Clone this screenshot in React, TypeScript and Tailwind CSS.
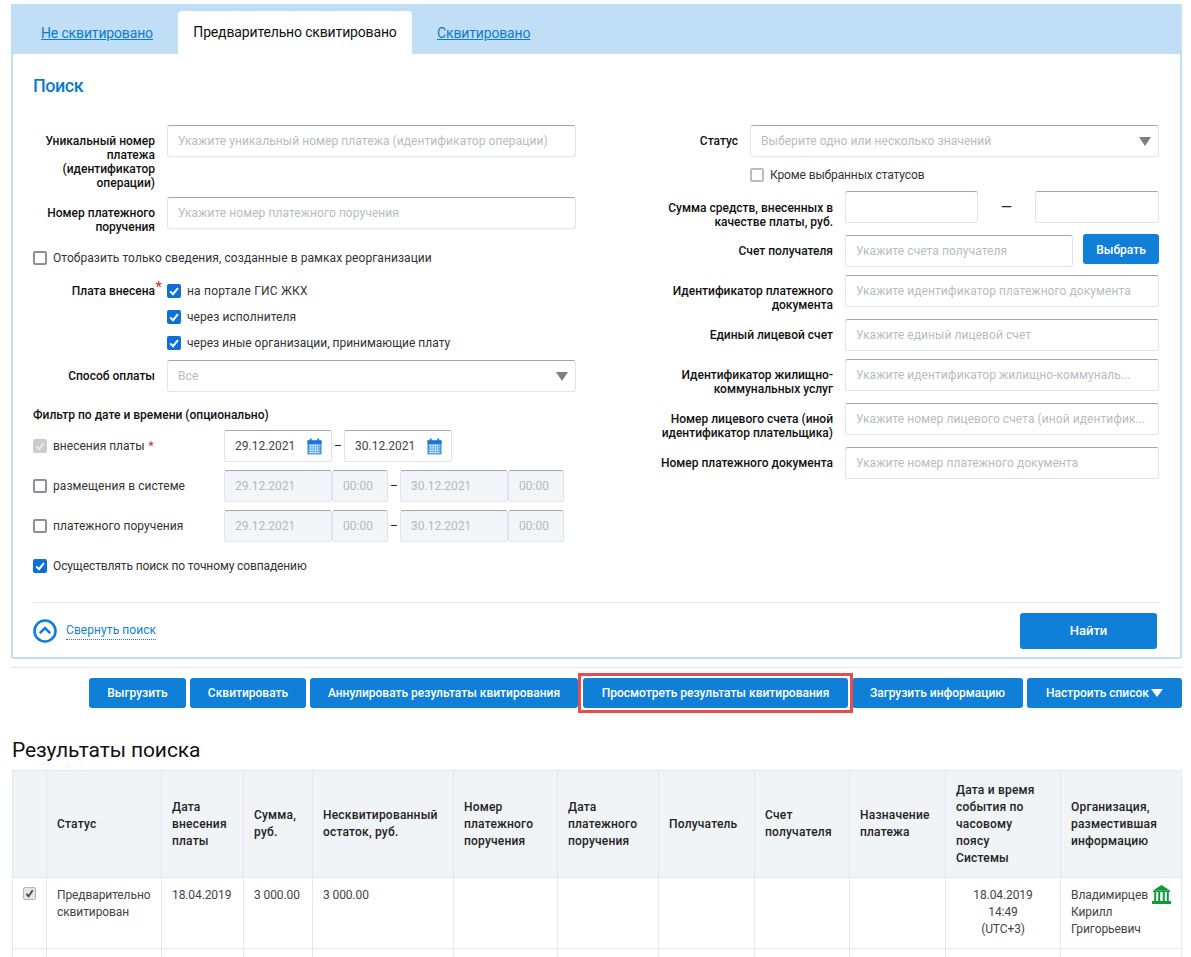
const labelCls = "text-right text-[12px] leading-[14px] font-medium text-[#111]";
const inputCls =
  "h-8 rounded-[3px] border border-[#dfe5ea] border-t-[#a4a6aa] bg-white px-[10px] text-[12px] tracking-[0.07px] text-[#444] outline-none placeholder:text-[#b9bcc0]";
const dateOffCls =
  "flex h-8 items-center rounded-[3px] border border-[#dfe5ea] border-t-[#a4a6aa] bg-[#f3f6f9] px-[10px] text-[12px] text-[#b4b8bc]";
const blueBtnCls = "h-[30px] rounded-[3px] bg-[#0f7fd8] text-[12px] font-medium text-white";

const Check = ({ on, muted }: { on?: boolean; muted?: boolean }) => (
  <span
    className={`flex h-[14px] w-[14px] shrink-0 items-center justify-center rounded-[2px] ${
      muted ? "bg-[#c9cbcf]" : on ? "bg-[#0f6fd8]" : "border-2 border-[#8f8f9a] bg-white"
    }`}
  >
    {(on || muted) && (
      <svg viewBox="0 0 14 14" className="h-[14px] w-[14px]" fill="none">
        <path d="M3.2 7.4 6 10.2l4.9-6" stroke={muted ? "#e9eaec" : "#fff"} strokeWidth="2" />
      </svg>
    )}
  </span>
);

const CheckRow = ({ on, muted, text, className = "tracking-[0.07px]" }: { on?: boolean; muted?: boolean; text: string; className?: string }) => (
  <div className={`flex items-center gap-[6px] text-[12px] leading-[14px] text-[#333] ${className}`}>
    <Check on={on} muted={muted} />
    <span>{text}</span>
  </div>
);

const Field = ({ label, ph, h = "" }: { label: string; ph: string; h?: string }) => (
  <div className={`flex gap-3 ${h}`}>
    <div className={`${labelCls} w-[122px] shrink-0 pt-[9px]`}>{label}</div>
    <input className={`${inputCls} w-[409px]`} placeholder={ph} />
  </div>
);

// right column rows are a fixed 32px, two-line labels just hang below
const RightField = ({ label, ph, className = "" }: { label: string; ph: string; className?: string }) => (
  <div className={`flex h-8 gap-3 ${className}`}>
    <div className={`${labelCls} w-[257px] shrink-0 pt-[9px] pl-[80px]`}>{label}</div>
    <input className={`${inputCls} w-[314px]`} placeholder={ph} />
  </div>
);

const Calendar = () => (
  <svg viewBox="0 0 16 17" className="h-[17px] w-[15px] shrink-0">
    <rect x="0.5" y="2" width="15" height="15" fill="#3f95e6" />
    <rect x="0.5" y="2" width="15" height="3.5" fill="#1877d4" />
    <rect x="3" y="0" width="2" height="4" fill="#1877d4" />
    <rect x="11" y="0" width="2" height="4" fill="#1877d4" />
    <path d="M2 7.5h12M2 10h12M2 12.5h12M2 15h12M4 6v10M6.5 6v10M9 6v10M11.5 6v10" stroke="#d7eafa" strokeWidth="0.9" />
  </svg>
);

const DateOn = ({ value }: { value: string }) => (
  <div className="flex h-8 w-[108px] items-center justify-between rounded-[3px] border border-[#dfe5ea] border-t-[#a4a6aa] bg-white pl-[10px] pr-[9px] text-[12px] text-[#444]">
    <span>{value}</span>
    <Calendar />
  </div>
);

const DateRowOff = ({ text }: { text: string }) => (
  <div className="flex h-8 items-center">
    <CheckRow text={text} className="w-[191px] tracking-[0.07px]" />
    <div className={`${dateOffCls} w-[108px]`}>29.12.2021</div>
    <div className={`${dateOffCls} w-[56px]`}>00:00</div>
    <span className="flex w-[12px] justify-center text-[12px] text-[#222]">–</span>
    <div className={`${dateOffCls} w-[108px]`}>30.12.2021</div>
    <div className={`${dateOffCls} w-[56px]`}>00:00</div>
  </div>
);

const Select = ({ ph, w }: { ph: string; w: string }) => (
  <div className={`flex h-8 items-center justify-between rounded-[3px] border border-[#dfe5ea] border-t-[#a4a6aa] bg-white pl-[10px] pr-[7px] text-[12px] tracking-[0.07px] text-[#b9bcc0] ${w}`}>
    <span>{ph}</span>
    <svg viewBox="0 0 12 9" className="h-[9px] w-[12px]">
      <path d="M0 0h12L6 9z" fill="#7d7f83" />
    </svg>
  </div>
);

const Bank = () => (
  <svg viewBox="0 0 19 19" className="-mt-[2px] h-[19px] w-[19px] shrink-0">
    <path d="M9.5 0 18 5.5H1z" fill="#0e9a3a" />
    <rect x="1" y="5.5" width="17" height="1.5" fill="#0e9a3a" />
    <path d="M3.2 7v9M7.2 7v9M11.8 7v9M15.8 7v9" stroke="#0e9a3a" strokeWidth="2" />
    <rect x="0" y="16" width="19" height="3" fill="#0e9a3a" />
  </svg>
);

const actionButtons = [
  { text: "Выгрузить", w: "w-[97px]" },
  { text: "Сквитировать", w: "w-[116px]" },
  { text: "Аннулировать результаты квитирования", w: "w-[268px]" },
];

const headers = [
  "",
  "Статус",
  "Дата внесения платы",
  "Сумма, руб.",
  "Несквитированный остаток, руб.",
  "Номер платежного поручения",
  "Дата платежного поручения",
  "Получатель",
  "Счет получателя",
  "Назначение платежа",
  "Дата и время\nсобытия по\nчасовому\nпоясу\nСистемы",
  "Организация, разместившая информацию",
];

const colWidths = [34, 115, 82, 69, 141, 104, 101, 96, 95, 96, 115, 121];
const thCls =
  "whitespace-pre-line border border-[#e2e8ec] px-[10px] text-left align-middle text-[12px] leading-[17px] font-medium tracking-[0.2px] text-[#222]";
const tdCls =
  "border border-[#e2e8ec] px-[10px] pt-[9px] pb-[10px] align-top text-[12px] leading-[17px] tracking-[-0.1px] text-[#444]";

export default function App() {
  return (
    <div className="h-[957px] overflow-hidden bg-white pt-1 pl-[11px] pr-[9px] font-['Roboto',sans-serif]">
      <div className="flex h-[50px] items-end bg-[#c0dff7] pl-[30px] tracking-[-0.15px]">
        <a className="mb-[12px] w-[137px] text-[14px] leading-[18px] text-[#0d7cc8] underline">Не сквитировано</a>
        <div className="flex h-[43px] w-[234px] items-center justify-center rounded-t-[4px] bg-white text-[14px] text-[#111]">
          Предварительно сквитировано
        </div>
        <a className="mb-[12px] ml-[25px] text-[14px] leading-[18px] text-[#0d7cc8] underline">Сквитировано</a>
      </div>

      <div className="h-[605px] rounded-b-[3px] border-2 border-t-0 border-[#c0dff7] pl-5 pr-5">
        <h2 className="pt-[21px] text-[18px] leading-[21px] font-medium tracking-[-0.5px] text-[#0d7cc8]">Поиск</h2>

        <div className="mt-[29px] flex h-[477px]">
          <div className="w-[543px] shrink-0">
            <div className="flex flex-col gap-2">
              <Field label="Уникальный номер платежа (идентификатор операции)" ph="Укажите уникальный номер платежа (идентификатор операции)" h="h-[64px]" />
              <Field label="Номер платежного поручения" ph="Укажите номер платежного поручения" />
            </div>
            <CheckRow text="Отобразить только сведения, созданные в рамках реорганизации" className="mt-[17px] tracking-[0.07px]" />
            <div className="mt-[19px] flex gap-3">
              <div className={`${labelCls} relative w-[122px] shrink-0`}>
                Плата внесена
                <span className="absolute -top-[4px] -right-[7px] text-[15px] font-normal text-[#d9232e]">*</span>
              </div>
              <div className="flex flex-col gap-3">
                <CheckRow on text="на портале ГИС ЖКХ" className="tracking-[0.2px]" />
                <CheckRow on text="через исполнителя" />
                <CheckRow on text="через иные организации, принимающие плату" className="tracking-normal" />
              </div>
            </div>
            <div className="mt-[10px] flex gap-3">
              <div className={`${labelCls} w-[122px] shrink-0 pt-[9px]`}>Способ оплаты</div>
              <Select ph="Все" w="w-[409px]" />
            </div>
            <div className="mt-4 text-[12px] leading-[14px] font-medium text-[#111]">Фильтр по дате и времени (опционально)</div>
            <div className="mt-2 flex h-8 items-center">
              <div className="w-[191px]">
                <CheckRow muted text="внесения платы" className="[&>span:last-child]:after:ml-1 [&>span:last-child]:after:text-[#d9232e] [&>span:last-child]:after:content-['*']" />
              </div>
              <DateOn value="29.12.2021" />
              <span className="flex w-[12px] justify-center text-[12px] text-[#222]">–</span>
              <DateOn value="30.12.2021" />
            </div>
            <div className="mt-2 flex flex-col gap-2">
              <DateRowOff text="размещения в системе" />
              <DateRowOff text="платежного поручения" />
            </div>
            <CheckRow on text="Осуществлять поиск по точному совпадению" className="mt-[17px] tracking-[-0.12px]" />
          </div>

          <div className="flex flex-1 flex-col">
            <div className="flex items-start gap-3">
              <div className={`${labelCls} w-[162px] shrink-0 pt-[9px]`}>Статус</div>
              <Select ph="Выберите одно или несколько значений" w="w-[409px]" />
            </div>
            <CheckRow text="Кроме выбранных статусов" className="mt-[11px] ml-[174px] tracking-[-0.12px] [&>span:first-child]:border-[#b9bcc0]" />
            <div className="mt-[9px] flex h-8 gap-3">
              <div className={`${labelCls} w-[257px] shrink-0 pt-[10px]`}>
                Сумма средств, внесенных в<br />качестве платы, руб.
              </div>
              <input className={`${inputCls} w-[133px]`} />
              <span className="flex w-[33px] justify-center pt-[6px] text-[14px] text-[#222]">—</span>
              <input className={`${inputCls} w-[124px]`} />
            </div>
            <div className="mt-3 flex h-8 gap-3">
              <div className={`${labelCls} w-[257px] shrink-0 pt-[9px]`}>Счет получателя</div>
              <input className={`${inputCls} w-[228px]`} placeholder="Укажите счета получателя" />
              <button className={`-mt-px -ml-[2px] w-[76px] pt-[2px] ${blueBtnCls}`}>Выбрать</button>
            </div>
            <RightField className="mt-2" label="Идентификатор платежного документа" ph="Укажите идентификатор платежного документа" />
            <RightField className="mt-3" label="Единый лицевой счет" ph="Укажите единый лицевой счет" />
            <RightField className="mt-2" label="Идентификатор жилищно-коммунальных услуг" ph="Укажите идентификатор жилищно-коммуналь..." />
            <RightField className="mt-3" label="Номер лицевого счета (иной идентификатор плательщика)" ph="Укажите номер лицевого счета (иной идентифик..." />
            <RightField className="mt-3" label="Номер платежного документа" ph="Укажите номер платежного документа" />
          </div>
        </div>

        <div className="flex h-[57px] items-center justify-between border-t border-[#e3e6e8]">
          <div className="flex items-center gap-[9px]">
            <svg viewBox="0 0 24 24" className="h-6 w-6">
              <circle cx="12" cy="12" r="10.5" fill="none" stroke="#0f7fd8" strokeWidth="2.6" />
              <path d="M6.8 14.2 12 9l5.2 5.2" fill="none" stroke="#0f7fd8" strokeWidth="2.6" />
            </svg>
            <a className="border-b border-dotted border-[#0f7fd8] pb-[2px] text-[12px] leading-[14px] tracking-[0.07px] text-[#0f7fd8]">Свернуть поиск</a>
          </div>
          <button className="mr-[3px] h-9 w-[137px] rounded-[3px] bg-[#0f7fd8] text-[13px] font-medium text-white">Найти</button>
        </div>
      </div>

      <div className="mt-2 border-t border-[#e3e6e8]" />

      <div className="mt-[10px] flex justify-end gap-1">
        {actionButtons.map((b) => (
          <button key={b.text} className={`${blueBtnCls} ${b.w}`}>
            {b.text}
          </button>
        ))}
        <div className="relative">
          <button className={`ml-px w-[265px] ${blueBtnCls}`}>Просмотреть результаты квитирования</button>
          <div className="absolute -top-[5px] -right-[5px] -bottom-[5px] -left-[4px] border-[3px] border-[#e84c4c]" />
        </div>
        <button className={`w-[171px] ${blueBtnCls}`}>Загрузить информацию</button>
        <button className={`flex w-[155px] items-center justify-center gap-[2px] ${blueBtnCls}`}>
          Настроить список
          <svg viewBox="0 0 12 8" className="h-2 w-3">
            <path d="M0 0h12L6 8z" fill="#fff" />
          </svg>
        </button>
      </div>

      <h2 className="mt-[30px] ml-px text-[21px] leading-[24px] tracking-[-0.1px] text-[#111]">Результаты поиска</h2>

      <table className="mt-2 ml-px table-fixed border-collapse">
        <colgroup>
          {colWidths.map((w, i) => (
            <col key={i} style={{ width: w }} />
          ))}
        </colgroup>
        <thead>
          <tr className="h-[107px] bg-[#f0f4f7]">
            {headers.map((h, i) => (
              <th key={i} className={thCls}>{h}</th>
            ))}
          </tr>
        </thead>
        <tbody>
          <tr>
            <td className={`${tdCls} text-center`}>
              <span className="mx-auto flex h-[13px] w-[13px] items-center justify-center rounded-[2px] border border-[#b4b4b4] bg-[#e6e6e6]">
                <svg viewBox="0 0 12 12" className="h-[11px] w-[11px]" fill="none">
                  <path d="M2.5 6.5 5 9l4.5-6.5" stroke="#4a4a4a" strokeWidth="2" />
                </svg>
              </span>
            </td>
            <td className={tdCls}>Предварительно сквитирован</td>
            <td className={tdCls}>18.04.2019</td>
            <td className={tdCls}>3 000.00</td>
            <td className={tdCls}>3 000.00</td>
            <td className={tdCls} />
            <td className={tdCls} />
            <td className={tdCls} />
            <td className={tdCls} />
            <td className={tdCls} />
            <td className={`${tdCls} text-center`}>18.04.2019<br />14:49<br />(UTC+3)</td>
            <td className={tdCls}>
              <div className="flex h-[17px] justify-between">
                <span>Владимирцев</span>
                <Bank />
              </div>
              <div>Кирилл<br />Григорьевич</div>
            </td>
          </tr>
          <tr className="h-[40px]">
            {colWidths.map((_, i) => (
              <td key={i} className={tdCls} />
            ))}
          </tr>
        </tbody>
      </table>
    </div>
  );
}
